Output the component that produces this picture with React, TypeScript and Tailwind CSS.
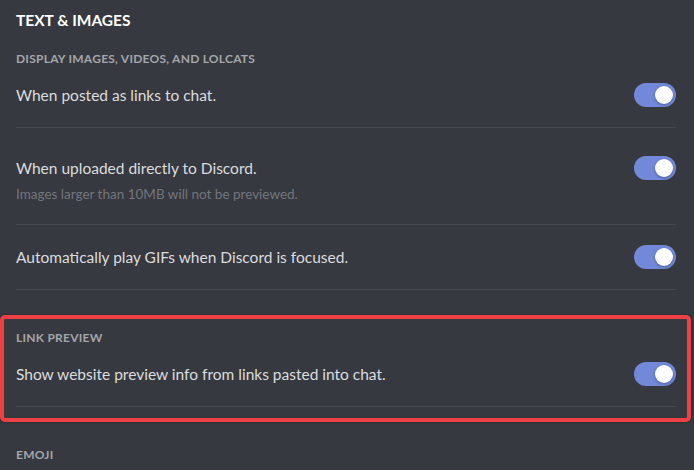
import React from "react";

function Toggle() {
  return (
    <div className="relative h-[24px] w-[42px] shrink-0 rounded-full bg-[#7289da]">
      <div className="absolute right-[3px] top-[3px] h-[18px] w-[18px] rounded-full bg-white shadow-[0_1px_3px_rgba(0,0,0,0.35)]" />
    </div>
  );
}

function Row({ title, note }: { title: string; note?: string }) {
  return (
    <div>
      <div className="flex h-[24px] items-center justify-between">
        <span className="text-[15.5px] leading-[20px] text-[#dcddde]">{title}</span>
        <Toggle />
      </div>
      {note && <div className="mt-[4px] text-[13.5px] leading-[20px] text-[#72767d]">{note}</div>}
    </div>
  );
}

function Divider() {
  return <div className="h-px bg-[#45484f]" />;
}

function Label({ children }: { children: React.ReactNode }) {
  return (
    <div className="text-[12px] font-bold uppercase leading-[16px] tracking-[0.02em] text-[#a3a6aa]">
      {children}
    </div>
  );
}

export default function App() {
  return (
    <div
      className="h-[470px] w-[694px] overflow-hidden bg-[#36393f]"
      style={{ fontFamily: "Lato, 'Noto Sans', sans-serif" }}
    >
      <div className="pl-[16px] pr-[18px] pt-[10px]">
        <h2 className="text-[15.5px] font-bold uppercase leading-[20px] text-white">Text &amp; Images</h2>
        <div className="mt-[21px]">
          <Label>Display images, videos, and lolcats</Label>
        </div>
        <div className="mt-[16px]">
          <Row title="When posted as links to chat." />
        </div>
        <div className="mt-[20px]">
          <Divider />
        </div>
        <div className="mt-[28px]">
          <Row title="When uploaded directly to Discord." note="Images larger than 10MB will not be previewed." />
        </div>
        <div className="mt-[20px]">
          <Divider />
        </div>
        <div className="mt-[20px]">
          <Row title="Automatically play GIFs when Discord is focused." />
        </div>
        <div className="mt-[20px]">
          <Divider />
        </div>
      </div>

      <div className="mt-[25px] w-[691px] rounded-[5px] border-[4px] border-[#ef4145] pb-[11px] pl-[12px] pr-[11px] pt-[11px] shadow-[0_0_2px_rgba(0,0,0,0.5)]">
        <Label>Link preview</Label>
        <div className="mt-[16px]">
          <Row title="Show website preview info from links pasted into chat." />
        </div>
        <div className="mt-[20px]">
          <Divider />
        </div>
      </div>

      <div className="mt-[25px] pl-[16px]">
        <Label>Emoji</Label>
      </div>
    </div>
  );
}
